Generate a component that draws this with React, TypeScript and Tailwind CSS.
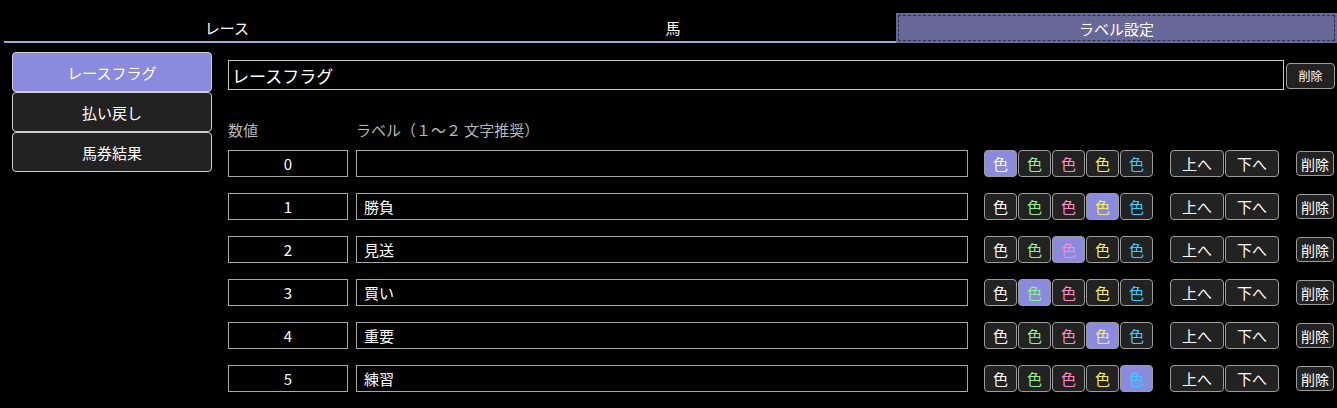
import React from 'react';

const tabs = ['レース', '馬', 'ラベル設定'];
const groups = ['レースフラグ', '払い戻し', '馬券結果'];

// swatch text colours: default, green, pink, yellow, cyan
const swatches = [
  'text-white',
  'text-[#90f090]',
  'text-[#ff8ac8]',
  'text-[#f0f060]',
  'text-[#40c8ff]',
];

const rows = [
  { value: 0, label: '', color: 0 },
  { value: 1, label: '勝負', color: 3 },
  { value: 2, label: '見送', color: 2 },
  { value: 3, label: '買い', color: 1 },
  { value: 4, label: '重要', color: 3 },
  { value: 5, label: '練習', color: 4 },
];

const frame = 'flex items-center justify-center rounded-[4px] border border-[#9c9c9c]';
const btn = `${frame} bg-[#222] text-white`;

export default function App() {
  return (
    <div className="w-[1337px] h-[408px] overflow-hidden bg-black text-white font-['Noto_Sans_CJK_JP',sans-serif]">
      {/* Tabs */}
      <div className="flex pt-[13px] pl-[4px]">
        {tabs.map((t, i) =>
          i === 2 ? (
            <div
              key={t}
              className="flex-1 h-[30px] flex items-center justify-center bg-[#676798] text-[15px] leading-none outline-1 outline-dashed outline-[#2c2c4c] outline-offset-[-3px]"
            >
              {t}
            </div>
          ) : (
            <div
              key={t}
              className="w-[446px] h-[30px] flex items-center justify-center border-b-2 border-[#a9a9e2] text-[15px] leading-none"
            >
              {t}
            </div>
          )
        )}
      </div>

      <div className="flex">
        {/* Group list */}
        <div className="ml-[12px] mt-[9px] w-[200px] flex flex-col">
          {groups.map((g, i) => (
            <button
              key={g}
              className={`h-[40px] rounded-[4px] border border-[#cfcfcf] text-[15px] leading-none ${
                i === 0 ? 'bg-[#8a8ade]' : 'bg-[#222]'
              }`}
            >
              {g}
            </button>
          ))}
        </div>

        {/* Editor */}
        <div className="ml-[16px] flex-1">
          <div className="flex items-start gap-[2px] mt-[17px]">
            <input
              defaultValue="レースフラグ"
              className="w-[1056px] h-[30px] border border-[#c8c8c8] bg-black px-[3px] text-[17px] leading-none text-white outline-none"
            />
            <button className={`${btn} mt-[3px] w-[49px] h-[26px] text-[12px] leading-none`}>
              削除
            </button>
          </div>

          <div className="flex mt-[32px] text-[15px] leading-none text-[#b8b8b8]">
            <div className="w-[128px]">数値</div>
            <div>ラベル（１～２ 文字推奨）</div>
          </div>

          <div className="flex flex-col gap-[16px] mt-[13px]">
            {rows.map((r) => (
              <div key={r.value} className="flex items-center h-[27px]">
                <input
                  defaultValue={r.value}
                  className="w-[120px] h-[27px] border border-[#a8a8a8] bg-black text-center text-[15px] text-white outline-none"
                />
                <input
                  defaultValue={r.label}
                  className="ml-[8px] w-[612px] h-[27px] border border-[#a8a8a8] bg-black px-[7px] text-[15px] text-white outline-none"
                />
                <div className="ml-[16px] flex gap-[1px]">
                  {swatches.map((c, i) => (
                    <button
                      key={i}
                      className={`${frame} w-[33px] h-[27px] text-[15px] leading-none ${c} ${
                        i === r.color ? 'bg-[#8a8ade]' : 'bg-[#222]'
                      }`}
                    >
                      色
                    </button>
                  ))}
                </div>
                <div className="ml-[17px] flex gap-[1px]">
                  <button className={`${btn} w-[54px] h-[27px] text-[15px] leading-none`}>上へ</button>
                  <button className={`${btn} w-[54px] h-[27px] text-[15px] leading-none`}>下へ</button>
                </div>
                <button className={`${btn} ml-[17px] w-[38px] h-[25px] text-[14px] leading-none`}>
                  削除
                </button>
              </div>
            ))}
          </div>
        </div>
      </div>
    </div>
  );
}
